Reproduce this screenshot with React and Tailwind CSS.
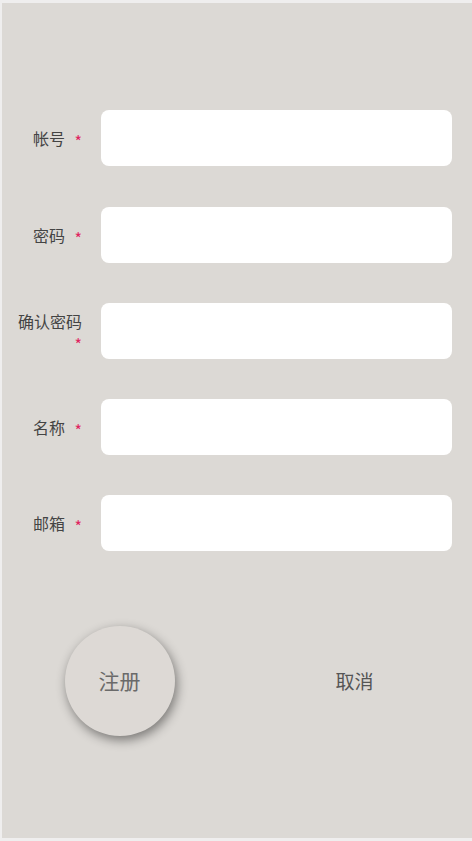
export default function App() {
  const fields = ["帐号", "密码", "确认密码", "名称", "邮箱"];
  return (
    <div
      className="w-[472px] h-[841px] bg-[#efeeee] pt-[3px] pl-[2px] pb-[3px]"
      style={{ fontFamily: '"Noto Sans CJK SC", "Noto Sans", sans-serif' }}
    >
      <div className="h-full bg-[#dcd9d5] pt-[107px] flex flex-col">
        <div className="flex flex-col gap-[40px]">
          {fields.map((f, i) => (
            <div
              key={f}
              className={`flex items-center pl-[10px] pr-[20px] ${i === 0 ? "mb-px" : ""}`}
            >
              <div className="w-[70px] text-right text-[16px] leading-[20px] text-[#444]">
                {f}{" "}
                <span className="relative top-[3px] ml-[6px] text-[16px] text-[#e0245e]">*</span>
              </div>
              <div className="ml-[19px] flex-1 h-[56px] bg-white rounded-[8px]"></div>
            </div>
          ))}
        </div>
        <div className="flex mt-[75px] items-center">
          <div className="flex-1 flex justify-center">
            <button className="w-[110px] h-[110px] rounded-full bg-[#ddd9d5] shadow-[2px_4px_11px_rgba(0,0,0,0.45)] text-[21px] text-[#6a6a6a] flex items-center justify-center">
              注册
            </button>
          </div>
          <div className="flex-1 flex justify-center">
            <span className="text-[19px] text-[#555]">取消</span>
          </div>
        </div>
      </div>
    </div>
  );
}
